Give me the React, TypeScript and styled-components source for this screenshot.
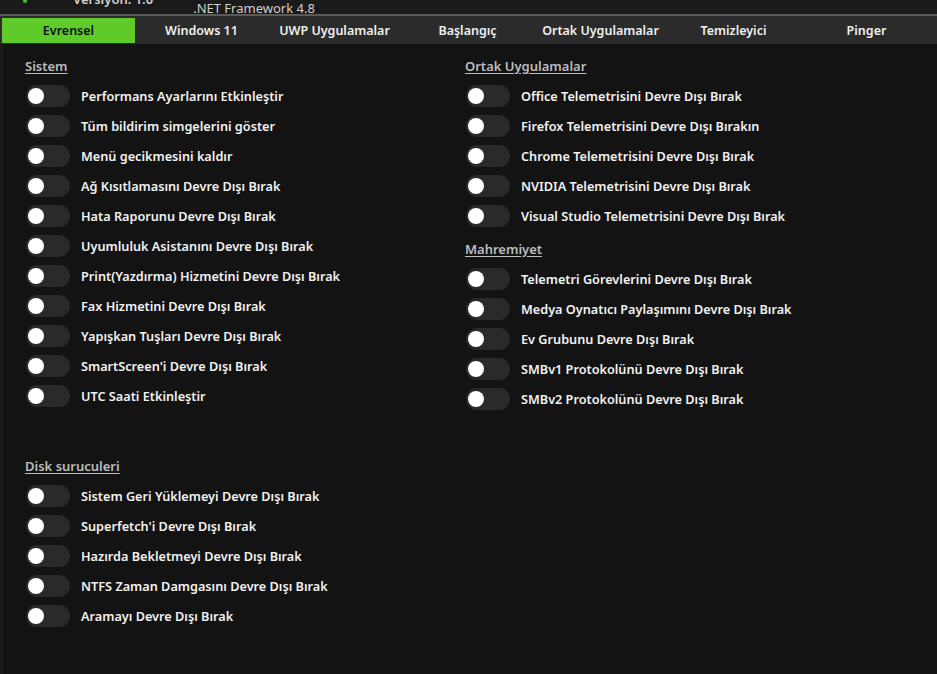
import { useState } from "react";
import styled, { createGlobalStyle } from "styled-components";

const GlobalStyle = createGlobalStyle`
  html, body {
    margin: 0;
    padding: 0;
    background: #1b1b1b;
    overflow: hidden;
  }
  * { box-sizing: border-box; }
`;

const tabs = [
  "Evrensel",
  "Windows 11",
  "UWP Uygulamalar",
  "Başlangıç",
  "Ortak Uygulamalar",
  "Temizleyici",
  "Pinger",
];

type Section = { title: string; items: string[]; gapTop?: number };

const leftSections: Section[] = [
  {
    title: "Sistem",
    items: [
      "Performans Ayarlarını Etkinleştir",
      "Tüm bildirim simgelerini göster",
      "Menü gecikmesini kaldır",
      "Ağ Kısıtlamasını Devre Dışı Bırak",
      "Hata Raporunu Devre Dışı Bırak",
      "Uyumluluk Asistanını Devre Dışı Bırak",
      "Print(Yazdırma) Hizmetini Devre Dışı Bırak",
      "Fax Hizmetini Devre Dışı Bırak",
      "Yapışkan Tuşları Devre Dışı Bırak",
      "SmartScreen'i Devre Dışı Bırak",
      "UTC Saati Etkinleştir",
    ],
  },
  {
    title: "Disk suruculeri",
    items: [
      "Sistem Geri Yüklemeyi Devre Dışı Bırak",
      "Superfetch'i Devre Dışı Bırak",
      "Hazırda Bekletmeyi Devre Dışı Bırak",
      "NTFS Zaman Damgasını Devre Dışı Bırak",
      "Aramayı Devre Dışı Bırak",
    ],
    gapTop: 47,
  },
];

const rightSections: Section[] = [
  {
    title: "Ortak Uygulamalar",
    items: [
      "Office Telemetrisini Devre Dışı Bırak",
      "Firefox Telemetrisini Devre Dışı Bırakın",
      "Chrome Telemetrisini Devre Dışı Bırak",
      "NVIDIA Telemetrisini Devre Dışı Bırak",
      "Visual Studio Telemetrisini Devre Dışı Bırak",
    ],
  },
  {
    title: "Mahremiyet",
    items: [
      "Telemetri Görevlerini Devre Dışı Bırak",
      "Medya Oynatıcı Paylaşımını Devre Dışı Bırak",
      "Ev Grubunu Devre Dışı Bırak",
      "SMBv1 Protokolünü Devre Dışı Bırak",
      "SMBv2 Protokolünü Devre Dışı Bırak",
    ],
    gapTop: 10,
  },
];

const Toggle = ({ label }: { label: string }) => {
  const [on, setOn] = useState(false);
  return (
    <Row onClick={() => setOn((p) => !p)}>
      <Track $on={on}>
        <Knob $on={on} />
      </Track>
      <Label>{label}</Label>
    </Row>
  );
};

const Column = ({ sections }: { sections: Section[] }) => (
  <Col>
    {sections.map((s) => (
      <Group key={s.title} $gapTop={s.gapTop ?? 0}>
        <GroupTitle>{s.title}</GroupTitle>
        {s.items.map((it) => (
          <Toggle key={it} label={it} />
        ))}
      </Group>
    ))}
  </Col>
);

const App = () => {
  const [active, setActive] = useState(0);
  return (
    <>
      <GlobalStyle />
      <Window>
        <Header>
          <Dot />
          <Version>Versiyon: 1.0</Version>
          <Framework>.NET Framework 4.8</Framework>
        </Header>
        <TabBar>
          {tabs.map((t, i) => (
            <Tab key={t} $active={i === active} onClick={() => setActive(i)}>
              {t}
            </Tab>
          ))}
        </TabBar>
        <Content>
          <Column sections={leftSections} />
          <Column sections={rightSections} />
        </Content>
      </Window>
    </>
  );
};

const Window = styled.div`
  width: 937px;
  height: 674px;
  display: flex;
  flex-direction: column;
  font-family: "Noto Sans", "Open Sans", sans-serif;
  background: #1b1b1b;
`;

const Header = styled.div`
  height: 14px;
  overflow: hidden;
  position: relative;
  display: flex;
  align-items: flex-end;
  background: #1a1a1a;
  border-bottom: 2px solid #5a5a5a;
  box-sizing: content-box;
`;

const Dot = styled.span`
  position: absolute;
  left: 23px;
  top: 0;
  width: 4px;
  height: 3px;
  border-radius: 0 0 2px 2px;
  background: #3fbf2a;
`;

const Version = styled.span`
  margin-left: 73px;
  margin-bottom: 8px;
  font-size: 13px;
  font-weight: 600;
  line-height: 14px;
  color: #cfcfcf;
`;

const Framework = styled.span`
  margin-left: 40px;
  margin-bottom: -2px;
  font-size: 13px;
  line-height: 16px;
  color: #cfcfcf;
`;

const TabBar = styled.div`
  height: 28px;
  display: grid;
  grid-template-columns: repeat(7, 133px);
  padding: 2px 0 1px 2px;
  background: #2b2b2b;
`;

const Tab = styled.div<{ $active: boolean }>`
  display: flex;
  align-items: center;
  justify-content: center;
  font-size: 12.5px;
  font-weight: 600;
  color: ${(p) => (p.$active ? "#101010" : "#f0f0f0")};
  background: ${(p) => (p.$active ? "#5ecb2b" : "transparent")};
  cursor: pointer;
`;

const Content = styled.div`
  flex: 1;
  margin-left: 3px;
  background: #131313;
  display: grid;
  grid-template-columns: 440px 1fr;
  padding: 14px 0 0 22px;
`;

const Col = styled.div`
  display: flex;
  flex-direction: column;
`;

const Group = styled.div<{ $gapTop: number }>`
  display: flex;
  flex-direction: column;
  margin-top: ${(p) => p.$gapTop}px;
`;

const GroupTitle = styled.div`
  font-size: 13px;
  font-weight: 600;
  color: #bdbdbd;
  text-decoration: underline;
  text-underline-offset: 2px;
  line-height: 16px;
  margin-bottom: 7px;
`;

const Row = styled.div`
  height: 30px;
  display: flex;
  align-items: center;
  gap: 11px;
  cursor: pointer;
`;

const Track = styled.div<{ $on: boolean }>`
  width: 44px;
  height: 22px;
  border-radius: 11px;
  background: ${(p) => (p.$on ? "#5ecb2b" : "#2a2a2a")};
  position: relative;
  margin-left: 1px;
`;

const Knob = styled.div<{ $on: boolean }>`
  position: absolute;
  top: 3px;
  left: ${(p) => (p.$on ? "25px" : "2px")};
  width: 16px;
  height: 16px;
  border-radius: 50%;
  background: #ffffff;
`;

const Label = styled.span`
  font-size: 12.7px;
  font-weight: 600;
  color: #f2f2f2;
  white-space: nowrap;
`;

export default App;
